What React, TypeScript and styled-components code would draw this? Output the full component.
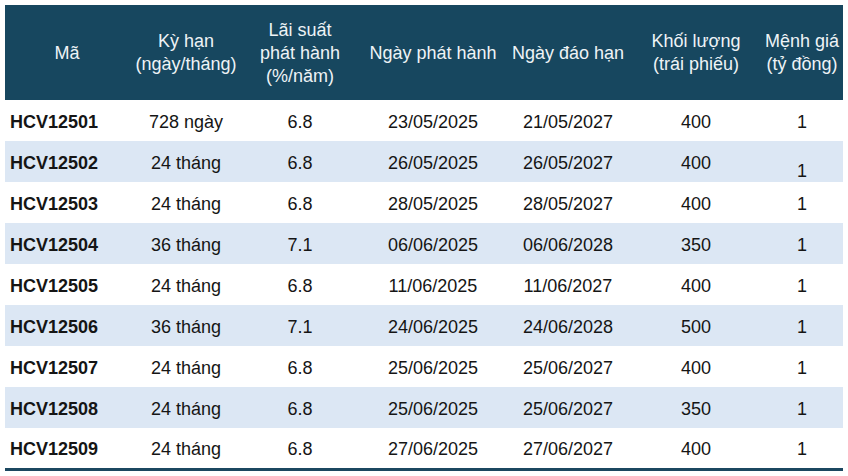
import React from 'react';
import styled, { createGlobalStyle } from 'styled-components';

const GlobalStyle = createGlobalStyle`
    body {
        margin: 0;
        background: #ffffff;
        font-family: "Liberation Sans", Arial, sans-serif;
    }
`;

const Page = styled.div`
    padding: 5px 5px 0 5px;
    width: 838px;
`;

const Table = styled.table`
    width: 838px;
    border-collapse: collapse;
    table-layout: fixed;
    font-size: 18px;
    color: #151515;
    border-bottom: 3px solid #1b4760;
`;

const HeadCell = styled.th<{ $last?: boolean }>`
    background: #17475f;
    color: #eef3f6;
    font-weight: normal;
    height: 94px;
    padding: 1px ${(p) => (p.$last ? '4px' : '0')} 0 0;
    line-height: 23px;
    text-align: center;
    vertical-align: middle;
    white-space: nowrap;
`;

const Row = styled.tr<{ $shaded: boolean }>`
    height: 41px;
    background: ${(p) => (p.$shaded ? '#dce7f4' : '#ffffff')};
`;

const Cell = styled.td<{ $left?: boolean; $bold?: boolean; $drop?: number; $last?: boolean }>`
    padding: ${(p) => p.$drop || 3}px ${(p) => (p.$last ? '4px' : '0')} 0 ${(p) => (p.$left ? '5px' : '0')};
    height: 41px;
    box-sizing: border-box;
    text-align: ${(p) => (p.$left ? 'left' : 'center')};
    font-weight: ${(p) => (p.$bold ? 'bold' : 'normal')};
    vertical-align: middle;
    white-space: nowrap;
`;

type Bond = {
    code: string;
    term: string;
    rate: string;
    issued: string;
    maturity: string;
    volume: string;
    face: string;
};

const bonds: Bond[] = [
    { code: 'HCV12501', term: '728 ngày', rate: '6.8', issued: '23/05/2025', maturity: '21/05/2027', volume: '400', face: '1' },
    { code: 'HCV12502', term: '24 tháng', rate: '6.8', issued: '26/05/2025', maturity: '26/05/2027', volume: '400', face: '1' },
    { code: 'HCV12503', term: '24 tháng', rate: '6.8', issued: '28/05/2025', maturity: '28/05/2027', volume: '400', face: '1' },
    { code: 'HCV12504', term: '36 tháng', rate: '7.1', issued: '06/06/2025', maturity: '06/06/2028', volume: '350', face: '1' },
    { code: 'HCV12505', term: '24 tháng', rate: '6.8', issued: '11/06/2025', maturity: '11/06/2027', volume: '400', face: '1' },
    { code: 'HCV12506', term: '36 tháng', rate: '7.1', issued: '24/06/2025', maturity: '24/06/2028', volume: '500', face: '1' },
    { code: 'HCV12507', term: '24 tháng', rate: '6.8', issued: '25/06/2025', maturity: '25/06/2027', volume: '400', face: '1' },
    { code: 'HCV12508', term: '24 tháng', rate: '6.8', issued: '25/06/2025', maturity: '25/06/2027', volume: '350', face: '1' },
    { code: 'HCV12509', term: '24 tháng', rate: '6.8', issued: '27/06/2025', maturity: '27/06/2027', volume: '400', face: '1' },
];

const widths = [124, 114, 114, 152, 118, 138, 78];

const App: React.FC = () => {
    return (
        <Page>
            <GlobalStyle />
            <Table>
                <colgroup>
                    {widths.map((w, i) => (
                        <col key={i} style={{ width: w }} />
                    ))}
                </colgroup>
                <thead>
                    <tr>
                        <HeadCell>Mã</HeadCell>
                        <HeadCell>Kỳ hạn<br />(ngày/tháng)</HeadCell>
                        <HeadCell>Lãi suất<br />phát hành<br />(%/năm)</HeadCell>
                        <HeadCell>Ngày phát hành</HeadCell>
                        <HeadCell>Ngày đáo hạn</HeadCell>
                        <HeadCell>Khối lượng<br />(trái phiếu)</HeadCell>
                        <HeadCell $last>Mệnh giá<br />(tỷ đồng)</HeadCell>
                    </tr>
                </thead>
                <tbody>
                    {bonds.map((b, i) => (
                        <Row key={b.code} $shaded={i % 2 === 1}>
                            <Cell $left $bold>{b.code}</Cell>
                            <Cell>{b.term}</Cell>
                            <Cell>{b.rate}</Cell>
                            <Cell>{b.issued}</Cell>
                            <Cell>{b.maturity}</Cell>
                            <Cell>{b.volume}</Cell>
                            {/* the second row's value sits a bit low in the source sheet */}
                            <Cell $last $drop={i === 1 ? 19 : 0}>{b.face}</Cell>
                        </Row>
                    ))}
                </tbody>
            </Table>
        </Page>
    );
};

export default App;
